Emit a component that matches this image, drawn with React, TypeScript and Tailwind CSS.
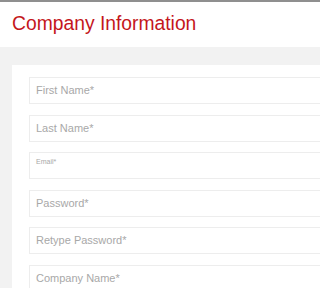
import React from "react";

const fields = ["First Name*", "Last Name*", "Email*", "Password*", "Retype Password*", "Company Name*"];

const Field = ({ label }: { label: string }) => {
  if (label === "Email*") {
    return (
      <div className="h-[27px] border border-[#ededed] bg-white px-[6px] pt-[4px]">
        <span className="block text-[7px] leading-[9px] text-[#a8a8a8]">{label}</span>
      </div>
    );
  }
  return (
    <div className="h-[27px] border border-[#ededed] bg-white px-[6px] flex items-center">
      <span className="text-[11px] text-[#a8a8a8]">{label}</span>
    </div>
  );
};

export default function App() {
  return (
    <div
      className="w-full h-[288px] overflow-hidden bg-[#f2f2f2] border-t-2 border-[#8f8f8f]"
      style={{ fontFamily: '"Liberation Sans", Arial, sans-serif' }}
    >
      <div className="h-[45px] bg-white px-[12px] pt-[10px]">
        <h1 className="text-[19.3px] leading-[24px] text-[#c4161c] whitespace-nowrap">Company Information</h1>
      </div>
      <div className="pl-[12px] pt-[18px]">
        <div className="w-[700px] bg-white pl-[17px] pt-[12px] pb-[20px]">
          <div className="flex flex-col gap-[10.5px]">
            {fields.map((f) => (
              <Field key={f} label={f} />
            ))}
          </div>
        </div>
      </div>
    </div>
  );
}
